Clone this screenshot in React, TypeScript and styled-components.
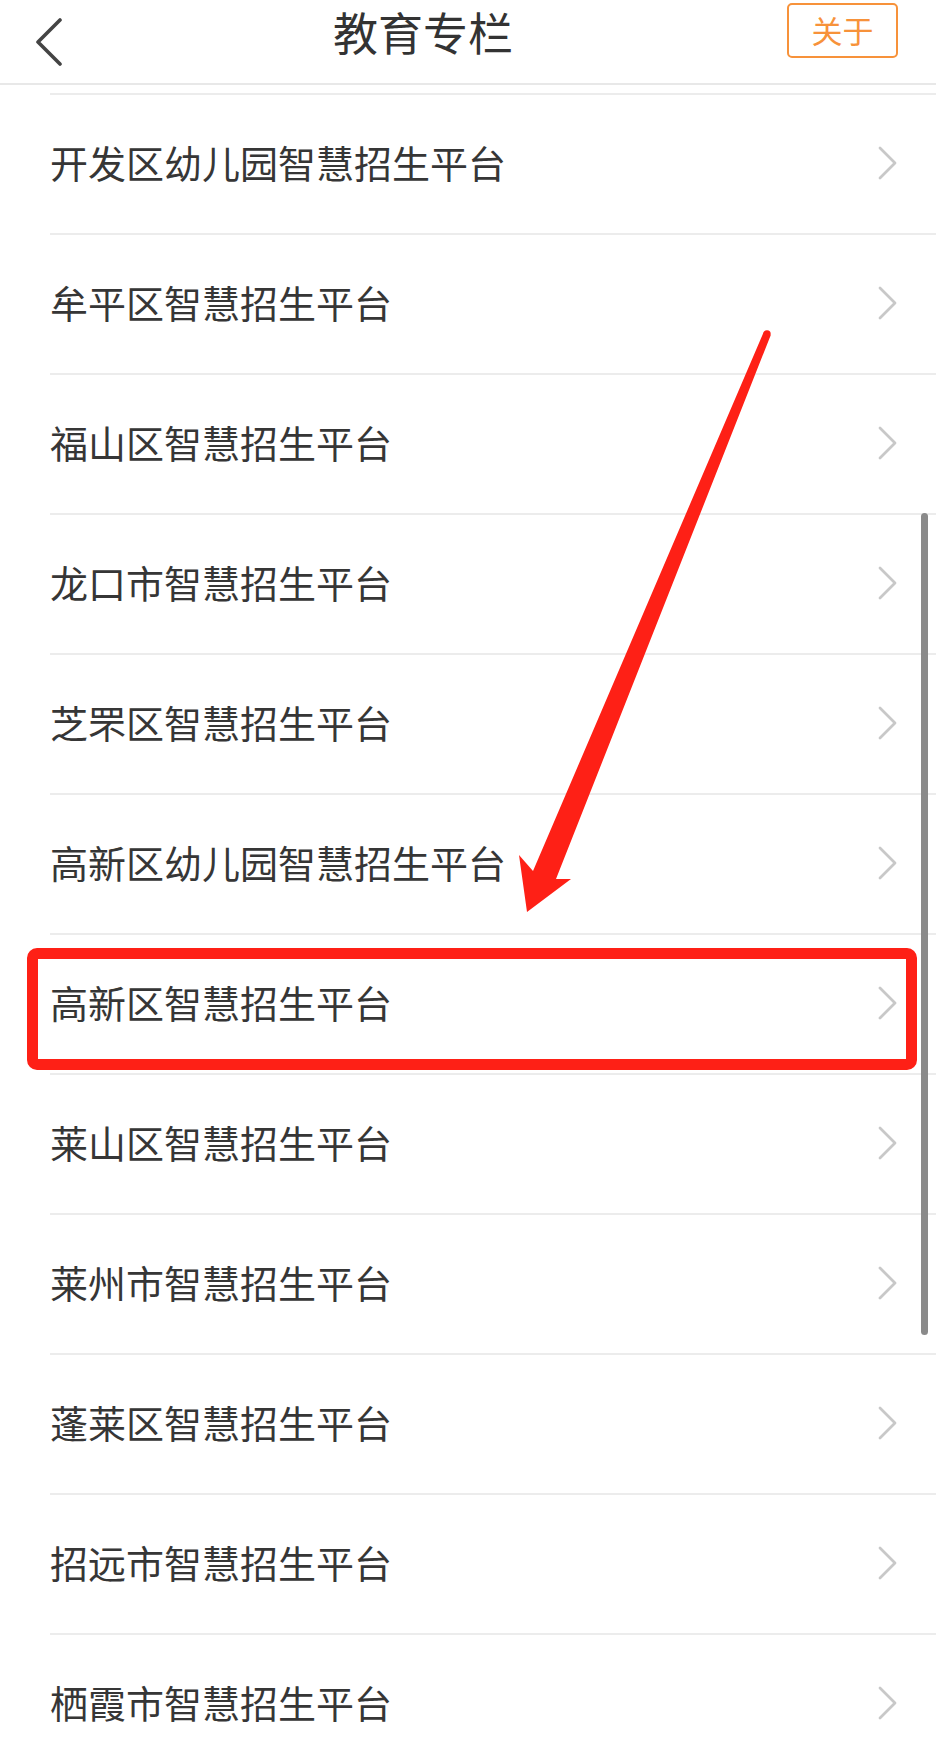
import styled, { createGlobalStyle } from 'styled-components';

const GlobalStyle = createGlobalStyle`
  html, body {
    margin: 0;
    padding: 0;
    background: #ffffff;
    overflow: hidden;
  }
  * {
    box-sizing: border-box;
  }
`;

const platforms: string[] = [
  '开发区幼儿园智慧招生平台',
  '牟平区智慧招生平台',
  '福山区智慧招生平台',
  '龙口市智慧招生平台',
  '芝罘区智慧招生平台',
  '高新区幼儿园智慧招生平台',
  '高新区智慧招生平台',
  '莱山区智慧招生平台',
  '莱州市智慧招生平台',
  '蓬莱区智慧招生平台',
  '招远市智慧招生平台',
  '栖霞市智慧招生平台',
];

const HIGHLIGHTED = 6;

const App = () => {
  return (
    <>
      <GlobalStyle />
      <Page>
        <Header>
          <BackButton>
            <svg width="40" height="56" viewBox="0 0 40 56">
              <polyline
                points="24,7 2,29 24,51"
                fill="none"
                stroke="#444"
                strokeWidth="3.6"
                strokeLinecap="round"
                strokeLinejoin="round"
              />
            </svg>
          </BackButton>
          <Title>教育专栏</Title>
          <HeaderRight>
            <AboutButton>关于</AboutButton>
          </HeaderRight>
        </Header>

        <List>
          <ScrolledEdge />
          {platforms.map((name, i) => (
            <Row key={name}>
              <RowText>{name}</RowText>
              <Chevron>
                <svg width="20" height="34" viewBox="0 0 20 34">
                  <polyline
                    points="2,2 17,17 2,32"
                    fill="none"
                    stroke="#c8c8c8"
                    strokeWidth="2.8"
                    strokeLinecap="round"
                    strokeLinejoin="round"
                  />
                </svg>
              </Chevron>
              {i === HIGHLIGHTED && <HighlightBox />}
            </Row>
          ))}
          <ScrollThumb />
        </List>

        <ArrowLayer viewBox="0 0 936 1740" width="936" height="1740">
          <polygon
            points="763.5,332.5 533,871 519,855 527,912 571,879 556,879 770.6,335.4"
            fill="#fe2016"
          />
          <circle cx="767" cy="334" r="3.7" fill="#fe2016" />
        </ArrowLayer>
      </Page>
    </>
  );
};

const Page = styled.div`
  position: relative;
  width: 936px;
  height: 1740px;
  overflow: hidden;
  background: #ffffff;
  font-family: "Noto Sans CJK SC", "Noto Sans", sans-serif;
`;

const Header = styled.div`
  display: flex;
  align-items: center;
  height: 85px;
  border-bottom: 2px solid #e8e8e8;
`;

const BackButton = styled.div`
  width: 100px;
  height: 100%;
  display: flex;
  align-items: center;
  padding-left: 36px;
  padding-bottom: 2px;
`;

const Title = styled.div`
  flex: 1;
  text-align: center;
  font-size: 45px;
  color: #333333;
  line-height: 1;
  padding-bottom: 20px;
`;

const HeaderRight = styled.div`
  width: 190px;
  height: 100%;
  display: flex;
  justify-content: flex-end;
  align-items: flex-start;
  padding-right: 38px;
  padding-top: 3px;
`;

const AboutButton = styled.div`
  width: 111px;
  height: 55px;
  border: 2px solid #f7923a;
  border-radius: 5px;
  color: #f7923a;
  font-size: 31px;
  line-height: 1;
  display: flex;
  align-items: center;
  justify-content: center;
  padding-bottom: 2px;
`;

const List = styled.div`
  position: relative;
`;

const ScrolledEdge = styled.div`
  height: 10px;
  margin-left: 50px;
  border-bottom: 2px solid #ececec;
`;

const Row = styled.div`
  position: relative;
  height: 140px;
  margin-left: 50px;
  padding-right: 38px;
  border-bottom: 2px solid #ececec;
  display: flex;
  align-items: center;
  justify-content: space-between;
`;

const RowText = styled.div`
  font-size: 38px;
  color: #363636;
  line-height: 1;
  padding-bottom: 4px;
`;

const Chevron = styled.div`
  display: flex;
  align-items: center;
  padding-bottom: 2px;
`;

const HighlightBox = styled.div`
  position: absolute;
  left: -23px;
  right: 19px;
  top: 13px;
  bottom: 3px;
  border: 11px solid #fe2016;
  border-radius: 10px;
  pointer-events: none;
`;

const ScrollThumb = styled.div`
  position: absolute;
  right: 8px;
  top: 428px;
  width: 7px;
  height: 822px;
  border-radius: 4px;
  background: #8a8a8a;
`;

const ArrowLayer = styled.svg`
  position: absolute;
  left: 0;
  top: 0;
  pointer-events: none;
`;

export default App;
